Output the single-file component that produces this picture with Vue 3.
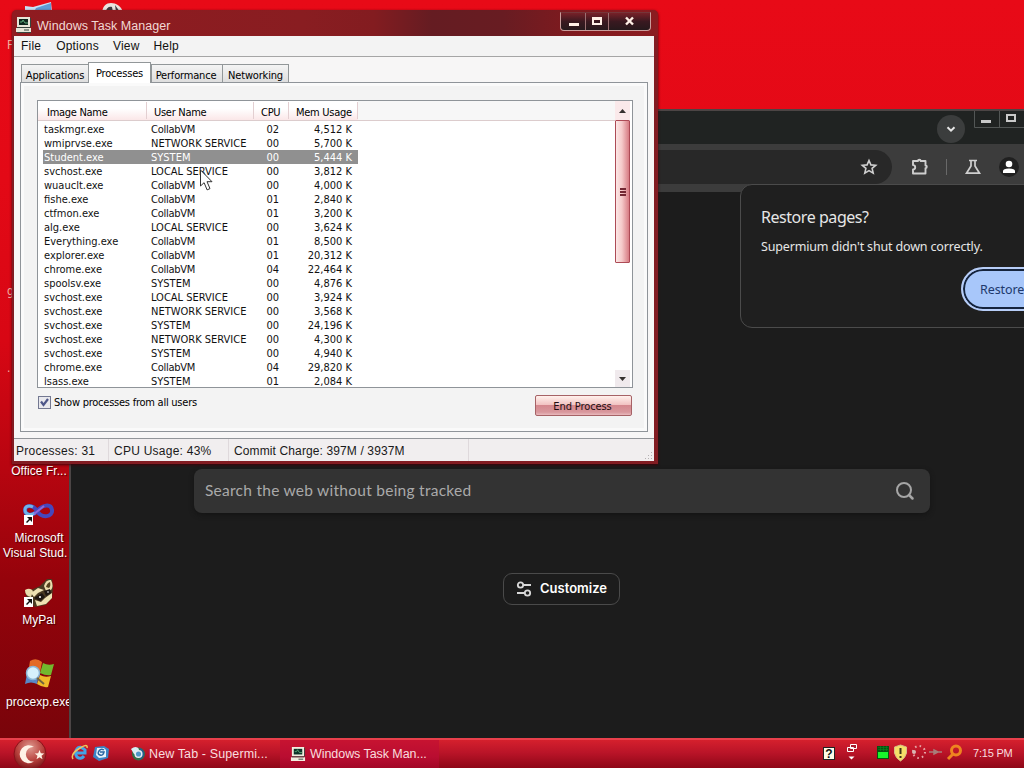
<script setup>
import { ref } from 'vue'

const menus = ['File', 'Options', 'View', 'Help']
const tabs = ['Applications', 'Processes', 'Performance', 'Networking']
const activeTab = ref('Processes')
const selected = ref(2)
const showAll = ref(true)

const processes = [
  ['taskmgr.exe', 'CollabVM', '02', '4,512 K'],
  ['wmiprvse.exe', 'NETWORK SERVICE', '00', '5,700 K'],
  ['Student.exe', 'SYSTEM', '00', '5,444 K'],
  ['svchost.exe', 'LOCAL SERVICE', '00', '3,812 K'],
  ['wuauclt.exe', 'CollabVM', '00', '4,000 K'],
  ['fishe.exe', 'CollabVM', '01', '2,840 K'],
  ['ctfmon.exe', 'CollabVM', '01', '3,200 K'],
  ['alg.exe', 'LOCAL SERVICE', '00', '3,624 K'],
  ['Everything.exe', 'CollabVM', '01', '8,500 K'],
  ['explorer.exe', 'CollabVM', '01', '20,312 K'],
  ['chrome.exe', 'CollabVM', '04', '22,464 K'],
  ['spoolsv.exe', 'SYSTEM', '00', '4,876 K'],
  ['svchost.exe', 'LOCAL SERVICE', '00', '3,924 K'],
  ['svchost.exe', 'NETWORK SERVICE', '00', '3,568 K'],
  ['svchost.exe', 'SYSTEM', '00', '24,196 K'],
  ['svchost.exe', 'NETWORK SERVICE', '00', '4,300 K'],
  ['svchost.exe', 'SYSTEM', '00', '4,940 K'],
  ['chrome.exe', 'CollabVM', '04', '29,820 K'],
  ['lsass.exe', 'SYSTEM', '01', '2,084 K'],
]
</script>

<template>
  <div class="desktop">
    <!-- desktop icons -->
    <svg class="peek" width="130" height="12" viewBox="0 0 130 12">
      <path d="M25 6l8 1 18-5 1 10H25z" fill="#c9e2f6" />
      <path d="M36 8l15-5v9H34z" fill="#5f9bd6" />
      <path d="M102 12c1-6 4-9 9-9s10 3 12 9z" fill="#e8e4e0" />
      <path d="M106 12c0-4 3-6 6-5l1 5zM115 5l5 7h-4z" fill="#3a3a40" />
    </svg>
    <span class="sliver sliver--f">F</span>
    <span class="sliver sliver--g">g</span>
    <span class="sliver sliver--dot">.</span>

    <div class="shortcut shortcut--office"><span>Office Fr...</span></div>

    <div class="shortcut shortcut--vs">
      <svg width="34" height="26" viewBox="0 0 34 26">
        <path d="M15 10C11 3 3 4 3 9s7 7 12 1 14-8 15-1-10 9-15 1z" fill="none" stroke="#4547bd" stroke-width="4" />
        <path d="M13 12C8 15 3 13 3 9s4-5 8-3" fill="none" stroke="#6fb4e8" stroke-width="3" />
        <path d="M12 13l10-8" stroke="#8d67d8" stroke-width="2" />
        <rect x="2" y="14" width="9" height="10" fill="#fff" />
        <path d="M5 16h5v5l-2-2-3 3-1-1 3-3z" fill="#111" />
      </svg>
      <span>Microsoft</span><span>Visual Stud.</span>
    </div>

    <div class="shortcut shortcut--mypal">
      <svg width="34" height="32" viewBox="0 0 34 32">
        <path d="M3 11l6 0 9-4 7-7h5l1 9-1 10-6 7-11 2-8-7z" fill="#4a3a22" />
        <path d="M3 11q5-3 8 1l-2 6q-6-1-6-7" fill="#eadcad" />
        <path d="M22 7q2-7 7-6 3 6 0 10l-5 1z" fill="#eadcad" />
        <path d="M24 8q1-4 4-5 1 4-1 6z" fill="#55421f" />
        <path d="M9 14l7-5 6 2-6 3-4 4zM13 21l6 2 4-4 7-5v5l-6 6-9 2z" fill="#efe2b4" />
        <path d="M12 19l8-5 3 4-5 4zM22 12l6-2 1 4-5 3z" fill="#1f1712" />
        <circle cx="18" cy="18" r="1" fill="#fff" />
        <circle cx="26" cy="13" r=".8" fill="#fff" />
        <rect x="2" y="18" width="9" height="10" fill="#fff" />
        <path d="M5 20h5v5l-2-2-3 3-1-1 3-3z" fill="#111" />
      </svg>
      <span>MyPal</span>
    </div>

    <div class="shortcut shortcut--procexp">
      <svg width="34" height="32" viewBox="0 0 34 32">
        <path d="M8 2q6-4 12 1l-2 11q-6-4-12 0z" fill="#e36a25" />
        <path d="M21 4q5 3 11 1l-3 11q-5 1-11-2z" fill="#72b82d" />
        <path d="M5 15q7-3 12 0l-2 10q-6-3-12 0z" fill="#5788c8" />
        <path d="M18 16q5 3 11 1l-3 11q-5 1-11-3z" fill="#efba2a" />
        <circle cx="11" cy="14" r="6.500" fill="#d6f0fb" stroke="#8bb6d5" stroke-width="1.500" />
        <path d="M15 19l7 6" stroke="#6f6340" stroke-width="2" />
      </svg>
      <span>procexp.exe</span>
    </div>

    <!-- browser -->
    <section class="browser">
      <div class="browser__tabs">
        <button class="round" type="button">
          <svg width="12" height="12" viewBox="0 0 12 12">
            <path d="M2.500 4.200L6 7.700l3.500-3.500" fill="none" stroke="#e6e6e6" stroke-width="2" />
          </svg>
        </button>
        <div class="browser__ctl">
          <svg width="50" height="17" viewBox="0 0 50 17">
            <path d="M.5 0v16.500M25.500 0v16.500M.5 16.500H50" stroke="#525655" />
            <rect x="7" y="9" width="10" height="3" fill="#c9c9c9" />
            <rect x="33" y="4" width="8" height="6" fill="none" stroke="#c9c9c9" stroke-width="2" />
          </svg>
        </div>
      </div>
      <div class="browser__bar">
        <div class="omnibox">
          <svg width="18" height="18" viewBox="0 0 18 18">
            <path
              d="M9 2.500l1.900 4.400 4.800.4-3.600 3.100 1.100 4.700L9 12.600l-4.200 2.500 1.100-4.700-3.600-3.100 4.800-.4z"
              fill="none"
              stroke="#d0d0d0"
              stroke-width="1.600"
            />
          </svg>
        </div>
        <svg class="ext" width="20" height="20" viewBox="0 0 20 20">
          <path
            d="M3 4h5a1.300 1.300 0 0 1 2.600 0H15.500v4.500a1.300 1.300 0 0 1 0 2.600V16.500H3V12.500a2.200 2.200 0 0 0 0-4.400z"
            fill="none"
            stroke="#cfcfcf"
            stroke-width="1.900"
            stroke-linejoin="round"
          />
        </svg>
        <i class="divider"></i>
        <svg class="flask" width="18" height="18" viewBox="0 0 18 18">
          <path d="M5 2.500h8M7 3v5l-4.500 7.200h13L11 8V3" fill="none" stroke="#cfcfcf" stroke-width="1.700" />
        </svg>
        <svg class="avatar" width="20" height="20" viewBox="0 0 20 20">
          <circle cx="10" cy="10" r="10" fill="#202020" />
          <circle cx="10" cy="7" r="3.300" fill="#fff" />
          <path d="M4 16v-2q0-2.500 6-2.500t6 2.500v2z" fill="#fff" />
        </svg>
      </div>

      <div class="search">
        <span>Search the web without being tracked</span>
        <svg width="22" height="22" viewBox="0 0 22 22">
          <circle cx="10" cy="10" r="7" fill="none" stroke="#a6a6a6" stroke-width="2" />
          <path d="M15 15l3.500 3.500" stroke="#a6a6a6" stroke-width="2.500" stroke-linecap="round" />
        </svg>
      </div>
      <button class="customize" type="button">
        <svg width="16" height="16" viewBox="0 0 16 16">
          <g fill="none" stroke="#d8d8d8" stroke-width="1.800">
            <circle cx="4.500" cy="4" r="2.700" />
            <path d="M7.200 4H15M1 12h7.500" />
            <circle cx="11.500" cy="12" r="2.700" />
          </g>
        </svg>
        <span>Customize</span>
      </button>

      <div class="bubble">
        <h2>Restore pages?</h2>
        <p>Supermium didn't shut down correctly.</p>
        <button type="button">Restore</button>
      </div>
    </section>

    <!-- task manager -->
    <section class="tm">
      <header class="tm__title">
        <svg width="17" height="17" viewBox="0 0 17 17">
          <path d="M2 1h13v10H2zM1 12h15v4H1z" fill="#e7e6d8" />
          <path d="M4 3h9v6H4z" fill="#0c261c" />
          <path d="M5 6h2l1-2 2 3h3" fill="none" stroke="#5da878" />
          <path d="M2 11.500h13M9 14h5M15.500 2v9M2 16.500h14" stroke="#35443e" />
        </svg>
        <span>Windows Task Manager</span>
        <div class="tm__ctl">
          <i><svg width="12" height="12"><path d="M2 7h10v3H2z" fill="#fff0e6" /></svg></i>
          <i><svg width="12" height="12"><path d="M1 1h10v8H1zM3 4v3h6V4z" fill="#fff0e6" fill-rule="evenodd" /></svg></i>
          <i class="wide"><svg width="12" height="12"><path d="M2 1.500l7 7M9 1.500l-7 7" stroke="#fff0e6" stroke-width="2.400" /></svg></i>
        </div>
      </header>

      <nav class="tm__menu"><span v-for="m in menus" :key="m">{{ m }}</span></nav>

      <div class="tm__body">
        <div class="tabs">
          <div
            v-for="t in tabs"
            :key="t"
            class="tab"
            :class="['tab--' + t.toLowerCase(), { 'tab--active': t === activeTab }]"
            @click="activeTab = t"
          >
            {{ t }}
          </div>
        </div>
        <div class="panel">
          <div class="list">
            <div class="list__main">
              <div class="head">
                <span>Image Name</span><span>User Name</span><span>CPU</span><span>Mem Usage</span>
              </div>
              <div
                v-for="(p, i) in processes"
                :key="i"
                class="row"
                :class="{ 'row--sel': i === selected }"
                @click="selected = i"
              >
                <span>{{ p[0] }}</span>
                <span :class="{ mixed: p[1] === 'CollabVM' }">{{ p[1] }}</span>
                <span>{{ p[2] }}</span>
                <span>{{ p[3] }}</span>
              </div>
            </div>
            <div class="scroll">
              <div class="scroll__btn"><svg width="7" height="4"><path d="M0 4l3.500-4L7 4z" fill="#35302f" /></svg></div>
              <div class="scroll__thumb"><i></i><i></i><i></i></div>
              <div class="scroll__btn scroll__btn--down"><svg width="7" height="4"><path d="M0 0l3.500 4L7 0z" fill="#35302f" /></svg></div>
            </div>
          </div>
          <div class="foot">
            <label class="check" @click="showAll = !showAll">
              <i>
                <svg v-if="showAll" width="11" height="11" viewBox="0 0 11 11">
                  <path d="M2 4.500l2.500 3.500L9 2" fill="none" stroke="#4d5689" stroke-width="2.200" />
                </svg>
              </i>
              <span>Show processes from all users</span>
            </label>
            <button class="end" type="button">End Process</button>
          </div>
        </div>
      </div>

      <footer class="tm__status">
        <span>Processes: 31</span><span>CPU Usage: 43%</span><span>Commit Charge: 397M / 3937M</span>
        <svg width="8" height="8" viewBox="0 0 8 8">
          <path d="M6 0h1v1H6zM3 3h1v1H3zM6 3h1v1H6zM0 6h1v1H0zM3 6h1v1H3zM6 6h1v1H6z" fill="#b5b0b2" />
        </svg>
      </footer>
    </section>

    <!-- taskbar -->
    <footer class="taskbar">
      <svg class="start" width="36" height="30" viewBox="0 0 36 30">
        <defs>
          <radialGradient id="orb" cx=".5" cy=".3" r=".75">
            <stop offset="0" stop-color="#df9a90" />
            <stop offset=".55" stop-color="#b8423d" />
            <stop offset="1" stop-color="#6d0a10" />
          </radialGradient>
        </defs>
        <circle cx="18" cy="16" r="16" fill="url(#orb)" stroke="#8b1019" />
        <path d="M22 9a9 9 0 1 0 0 14.500 7.300 7.300 0 1 1 0-14.500z" fill="#fff2e6" />
        <path d="M27.500 12l1.300 3.300 3.500.2-2.800 2.200 1 3.500-3-2-3 2 1-3.500-2.800-2.200 3.500-.2z" fill="#fff2e6" />
      </svg>
      <svg class="quick" width="40" height="18" viewBox="0 0 40 18">
        <path d="M13 12q-3 4-7 1-3-4 0-8t8 1v3H5" fill="none" stroke="#42a4e6" stroke-width="3" />
        <path d="M2 15Q-1 10 9 4q8-5 7 0" fill="none" stroke="#f0c35b" stroke-width="1.500" />
        <path d="M24 3l9-1 5 3-1 9-9 3-6-4z" fill="#3b85c5" />
        <path d="M26 4h7l2 2v7l-7 1-3-3z" fill="#e7f3fb" />
        <path d="M33 6q-3-2-5 1t1 4 4-3h-4" fill="none" stroke="#2967a3" stroke-width="1.500" />
      </svg>
      <div class="task task--tab">
        <svg width="16" height="16" viewBox="0 0 16 16">
          <circle cx="8.500" cy="8" r="6.500" fill="#346f48" />
          <path d="M1 3q5-4 8 0l-2 6-3-1z" fill="#d6f0f5" />
          <path d="M10 2q5 2 4 8l-4 4z" fill="#235f8e" />
          <circle cx="8.500" cy="8" r="3.300" fill="#4e97c8" stroke="#e7edf0" stroke-width="1.500" />
        </svg>
        <span>New Tab - Supermi...</span>
      </div>
      <div class="task task--active">
        <svg width="16" height="16" viewBox="0 0 17 17">
          <path d="M2 1h13v10H2zM1 12h15v4H1z" fill="#f2eee0" />
          <path d="M4 3h9v6H4z" fill="#0c3329" />
          <path d="M5 6h2l1-2 2 3h3" fill="none" stroke="#5da878" />
          <path d="M2 11.500h13M9 14h5M15.500 2v9" stroke="#35443e" />
        </svg>
        <span>Windows Task Man...</span>
      </div>
      <div class="tray">
        <b class="help">?</b>
        <svg width="12" height="20" viewBox="0 0 12 20">
          <path d="M4.500 1.500h6v4h-6zM1.500 4.500h6v4h-6z" fill="#a81d2e" stroke="#fff" />
          <path d="M2.500 13.500h6l-3 3z" fill="#fff" />
        </svg>
        <svg class="tray__icons" width="88" height="18" viewBox="0 0 88 18">
          <path d="M0 2h12v13H0z" fill="#07530f" />
          <path d="M1 8h10v6H1z" fill="#18f42b" />
          <path d="M1 3.500h10M1 5.500h10M3.500 2v5M6.500 2v5M9.500 2v5" stroke="#0b8620" stroke-width=".6" />
          <path d="M23.500 1l6 2v6q-1 5-6 8-5-3-6-8V3z" fill="#f5df67" stroke="#d8bc87" />
          <path d="M23.500 4v6M23.500 12v2" stroke="#3e3418" stroke-width="2" />
          <circle cx="42" cy="8" r="6" fill="none" stroke="#e7a7a8" stroke-width="2" stroke-dasharray="1.500 3.200" />
          <circle cx="37" cy="8" r="2" fill="#d9b5b1" />
          <path d="M52 8h13M57 6l4 2-4 2z" stroke="#a87d79" stroke-width="1.500" fill="#a87d79" />
          <circle cx="79" cy="6.500" r="4.500" fill="none" stroke="#ee8420" stroke-width="3" />
          <path d="M76 10l-5 5" stroke="#ee8420" stroke-width="3" />
        </svg>
        <time>7:15 PM</time>
      </div>
    </footer>

    <svg class="cursor" width="16" height="24" viewBox="0 0 16 24">
      <path d="M1.500 1v16l3.600-3.300 3 7.200 2.900-1.300-3-6.900h5z" fill="#fff" stroke="#333" />
    </svg>
  </div>
</template>

<style>
html,
body {
  margin: 0;
  overflow: hidden;
}
</style>

<style scoped>
* {
  box-sizing: border-box;
}
button {
  font: inherit;
  padding: 0;
}
svg {
  flex: none;
}
.desktop {
  position: relative;
  width: 1024px;
  height: 768px;
  overflow: hidden;
  font: 11px 'DejaVu Sans Condensed', 'DejaVu Sans', sans-serif;
  font-stretch: condensed;
  background: linear-gradient(#e80a17 0, #e30916 180px, #d80714 340px, #b70510 470px, #95030b 580px, #79040a 738px);
}
.peek {
  position: absolute;
  left: 0;
  top: 0;
}
.sliver {
  position: absolute;
  left: 7px;
  color: #f1b6a2;
  font-size: 12px;
}
.sliver--f {
  top: 38px;
}
.sliver--g {
  top: 284px;
}
.sliver--dot {
  top: 361px;
}
.shortcut {
  position: absolute;
  left: 0;
  width: 78px;
  display: flex;
  flex-direction: column;
  align-items: center;
  font: 12px/15px 'Liberation Sans', Arial, sans-serif;
  letter-spacing: 0.05px;
  color: #fff;
  text-shadow: 1px 1px 1px #400;
  white-space: nowrap;
}
.shortcut--office {
  top: 464px;
}
.shortcut--vs {
  top: 501px;
}
.shortcut--vs svg {
  margin-bottom: 4px;
}
.shortcut--vs span:last-child {
  align-self: flex-start;
  margin-left: 3px;
}
.shortcut--mypal {
  top: 579px;
}
.shortcut--mypal svg {
  margin-bottom: 2px;
}
.shortcut--procexp {
  top: 659px;
}
.shortcut--procexp svg {
  margin-bottom: 4px;
}

.browser {
  position: absolute;
  left: 69px;
  top: 109px;
  width: 980px;
  height: 630px;
  background: #1c1c1c;
  border: 2px solid #4c4545;
  border-bottom: 0;
}
.browser__tabs {
  display: flex;
  height: 33px;
  background: #202322;
}
.round {
  width: 28px;
  height: 28px;
  margin: 4px 9px 0 866px;
  display: grid;
  place-items: center;
  border: 0;
  border-radius: 50%;
  background: #3b3d3d;
}
.browser__bar {
  display: flex;
  align-items: center;
  height: 48px;
  padding-bottom: 2px;
  background: #3c3c3c;
}
.omnibox {
  display: flex;
  align-items: center;
  justify-content: flex-end;
  width: 821px;
  height: 34px;
  padding-right: 14px;
  border-radius: 0 17px 17px 0;
  background: #282828;
}
.ext {
  margin-left: 18px;
}
.divider {
  width: 1px;
  height: 16px;
  margin-left: 16px;
  background: #696969;
}
.flask {
  margin-left: 17px;
}
.avatar {
  margin-left: 17px;
}
.search {
  display: flex;
  align-items: center;
  justify-content: space-between;
  width: 736px;
  height: 44px;
  margin: 277px 0 0 123px;
  padding: 0 14px 0 11px;
  border-radius: 8px;
  background: #333;
  box-shadow: 0 2px 5px #141414;
  color: #aaa;
  font: 15.500px/42px Lato, sans-serif;
  letter-spacing: 0.26px;
}
.search span {
  margin-bottom: 2px;
}
.customize {
  display: flex;
  align-items: center;
  gap: 8px;
  width: 117px;
  height: 32px;
  margin: 60px 0 0 432px;
  padding: 0 0 0 12px;
  border: 1px solid #4a4a4a;
  border-radius: 9px;
  background: #1c1c1c;
  color: #fff;
  font: 600 13px Inter, sans-serif;
}
.customize span {
  margin-bottom: 2px;
}
.bubble {
  position: absolute;
  left: 669px;
  top: 73px;
  width: 330px;
  height: 144px;
  padding: 0 20px;
  border: 1px solid #4b4b4b;
  border-radius: 12px;
  background: #1f1f1f;
  color: #e6e6e6;
  font-family: 'Noto Sans', sans-serif;
  white-space: nowrap;
}
.bubble h2 {
  margin: 20px 0 0;
  font: 16px/24px 'Noto Sans', sans-serif;
  letter-spacing: -0.45px;
}
.bubble p {
  margin: 9px 0 0;
  font-size: 12.500px;
  line-height: 18px;
  letter-spacing: -0.16px;
}
.bubble button {
  width: 100px;
  height: 44px;
  margin: 11px 0 0 200px;
  padding-left: 17px;
  text-align: left;
  font-size: 12.500px;
  letter-spacing: -0.1px;
  color: #20396c;
  background: #a8c7fa;
  border: 2px solid #b7cdf7;
  border-radius: 22px;
  box-shadow: inset 0 0 0 2px #15243d;
}

.tm {
  position: absolute;
  left: 12px;
  top: 10px;
  width: 646px;
  height: 454px;
  display: flex;
  flex-direction: column;
  padding: 0 4px 3px 2px;
  background: #821c22;
  border-radius: 5px 5px 0 0;
  box-shadow: 0 1px 3px #400309;
}
.tm__title {
  display: flex;
  align-items: center;
  height: 28px;
  margin: 0 -4px 0 -2px;
  padding-left: 3px;
  border-radius: 5px 5px 0 0;
  background: linear-gradient(90deg, #8f1b20, #891d21 45%, #831c20 56%, #651c22 65%, #681c22 76%, #821a1e 88%, #8b1c20);
  color: #f2d8d4;
  font: 12.500px 'Liberation Sans', Arial, sans-serif;
}
.tm__title > svg {
  margin-top: 2px;
}
.tm__title > span {
  margin: 5px 0 0 5px;
  letter-spacing: 0.05px;
}
.tm__ctl {
  display: flex;
  align-self: flex-start;
  width: 91px;
  height: 19px;
  margin: 2px 7px 0 auto;
  border: 1px solid #c99d9b;
  border-top-color: #763539;
  border-radius: 0 0 4px 4px;
  background: linear-gradient(#782128, #3a1920 50%, #26191c);
}
.tm__ctl i {
  display: grid;
  place-items: center;
  width: 24px;
}
.tm__ctl i + i {
  border-left: 1px solid #9b7072;
}
.tm__ctl .wide {
  width: 42px;
}
.tm__menu {
  display: flex;
  gap: 14px;
  height: 21px;
  padding-left: 7px;
  background: #f3f3f3;
  border-bottom: 1px solid #a5a5a5;
  color: #111;
  font: 12px/20px 'Liberation Sans', Arial, sans-serif;
  letter-spacing: 0.2px;
}
.tm__menu span:first-child {
  margin-right: 1px;
}
.tm__body {
  flex: 1;
  padding: 5px 6px 6px;
  background: #f7f6f6;
}
.tabs {
  display: flex;
  align-items: flex-end;
  height: 20px;
  padding-left: 1px;
}
.tab {
  height: 18px;
  border: 1px solid #929799;
  border-bottom: 0;
  background: linear-gradient(#f4f4f4, #dedede);
  text-align: center;
  line-height: 21px;
  letter-spacing: -0.18px;
  cursor: default;
}
.tab--applications {
  width: 68px;
}
.tab--processes {
  width: 63px;
}
.tab--performance {
  width: 72px;
  padding-right: 2px;
}
.tab--networking {
  width: 67px;
  margin-left: -1px;
}
.tab--active {
  position: relative;
  height: 21px;
  margin: 0 0 -1px -1px;
  background: #fff;
}
.panel {
  height: 350px;
  padding: 17px 14px 0 16px;
  border: 1px solid #8f9499;
  background: #f3f3f3;
  box-shadow: inset 0 0 0 3px #fafafa;
}
.list {
  display: flex;
  height: 288px;
  border: 1px solid #8f9499;
  background: #fff;
}
.list__main {
  flex: 1;
  overflow: hidden;
}
.head {
  display: flex;
  height: 20px;
  margin-bottom: 1px;
  background: linear-gradient(90deg, transparent 320px, #f7f7f7 320px), linear-gradient(#fff 40%, #fbe7e8);
  border-bottom: 1px solid #dccccd;
}
.head span {
  height: 17px;
  margin-top: 1px;
  line-height: 21px;
  letter-spacing: -0.28px;
  border-right: 1px solid #e3cfd1;
  padding-left: 7px;
  white-space: nowrap;
}
.head span:nth-child(1) {
  width: 109px;
  padding-left: 9px;
}
.head span:nth-child(2) {
  width: 107px;
}
.head span:nth-child(3) {
  width: 35px;
}
.head span:nth-child(4) {
  width: 69px;
}
.row {
  display: grid;
  grid-template-columns: 107px 98px 31px 79px;
  width: 315px;
  height: 14px;
  margin-left: 5px;
  padding-left: 1px;
  line-height: 16px;
  color: #111;
  white-space: nowrap;
}
.row--sel {
  color: #fff;
  background: #909090;
}
.row .mixed {
  letter-spacing: -0.25px;
}
.row span:nth-child(n + 3) {
  text-align: right;
}
.row span:nth-child(4) {
  padding-right: 7px;
}
.row span:nth-child(3) {
  padding-right: 1px;
}
.scroll {
  display: flex;
  flex-direction: column;
  width: 17px;
  padding-right: 2px;
  background: #fff;
}
.scroll__btn {
  display: grid;
  place-items: center;
  height: 19px;
  flex: none;
  background: #fae9ea;
}
.scroll__btn--down {
  height: 17px;
  margin-top: auto;
  background: #f0eaed;
}
.scroll__thumb {
  display: flex;
  flex-direction: column;
  align-items: center;
  justify-content: center;
  gap: 1px;
  height: 143px;
  border: 1px solid #ad4b56;
  border-radius: 1px;
  background: linear-gradient(90deg, #fce7e6, #f5caca 45%, #d77b83);
}
.scroll__thumb i {
  width: 6px;
  height: 2px;
  background: #742833;
}
.foot {
  display: flex;
  justify-content: space-between;
  padding: 7px 1px 0 0;
}
.check {
  display: flex;
  height: 14px;
  align-items: center;
  gap: 3px;
  letter-spacing: -0.24px;
}
.check i {
  display: grid;
  place-items: center;
  width: 13px;
  height: 13px;
  margin-left: 1px;
  border: 1px solid #737891;
  background: #e8e8ed;
}
.end {
  width: 97px;
  height: 21px;
  padding: 2px 2px 0 0;
  border: 1px solid #a66266;
  border-radius: 2px;
  background: linear-gradient(#fff1ec, #f2c4c3 45%, #d5888e 50%, #d8989d 85%, #e9b9bd);
  letter-spacing: -0.1px;
  color: #220d10;
}
.tm__status {
  display: flex;
  height: 23px;
  border-top: 1px solid #929599;
  background: #f1eeef;
  color: #191919;
  font: 12px/24px 'Liberation Sans', Arial, sans-serif;
  letter-spacing: 0.25px;
}
.tm__status span {
  padding-left: 5px;
  border-right: 1px solid #dfd9dc;
}
.tm__status span:nth-child(1) {
  width: 95px;
  padding-left: 2px;
}
.tm__status span:nth-child(2) {
  width: 120px;
}
.tm__status span:nth-child(3) {
  width: 240px;
  letter-spacing: 0.12px;
}
.tm__status svg {
  margin: auto 1px 1px auto;
}

.taskbar {
  position: absolute;
  left: 0;
  bottom: 0;
  display: flex;
  width: 1024px;
  height: 30px;
  overflow: hidden;
  border-top: 2px solid #e9404c;
  background: linear-gradient(#d5202d, #ba1428 45%, #8e0717);
  color: #f9dddf;
  font: 12.500px 'Liberation Sans', Arial, sans-serif;
}
.start {
  margin: -2px 0 0 12px;
}
.quick {
  margin: 4px 0 0 23px;
}
.task {
  display: flex;
  align-items: center;
  height: 27px;
  gap: 3px;
}
.task--tab {
  width: 150px;
  margin-left: 19px;
  letter-spacing: 0.12px;
}
.task--active {
  width: 159px;
  height: 28px;
  padding-left: 10px;
  gap: 4px;
  letter-spacing: -0.06px;
  background: linear-gradient(#c71331, #b90d31 60%, #a20726);
}
.tray {
  display: flex;
  align-items: center;
  width: 201px;
  height: 26px;
  margin-left: auto;
}
.help {
  width: 12px;
  height: 13px;
  margin-right: 11px;
  border: 1px solid #222;
  background: #fffbe8;
  color: #111;
  text-align: center;
  font: bold 12px/12px 'Liberation Sans', sans-serif;
}
.tray__icons {
  margin: 0 8px 0 19px;
}
.tray time {
  font-size: 11px;
  letter-spacing: -0.2px;
  white-space: nowrap;
}
.cursor {
  position: absolute;
  left: 199px;
  top: 169px;
}
</style>
